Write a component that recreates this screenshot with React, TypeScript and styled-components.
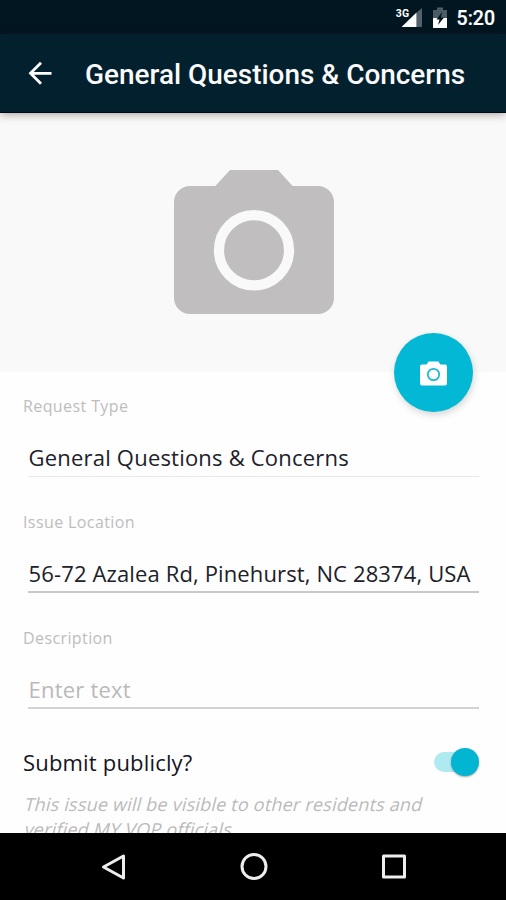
import React from "react";
import styled, { createGlobalStyle } from "styled-components";

const Global = createGlobalStyle`
  * { box-sizing: border-box; }
  html, body { margin: 0; padding: 0; background: #fff; }
  svg { display: block; flex: none; }
`;

const Screen = styled.div`
  width: 506px;
  height: 900px;
  display: flex;
  flex-direction: column;
  overflow: hidden;
  background: #fefefe;
  font-family: "Open Sans", sans-serif;
`;

const StatusBar = styled.div`
  height: 34px;
  flex: none;
  display: flex;
  justify-content: flex-end;
  padding: 0 11px 0 0;
  background: #011620;
  color: #fff;
`;

const Clock = styled.span`
  font: 500 19.5px/37px Roboto, sans-serif;
  white-space: nowrap;
  margin-left: 7px;
  -webkit-text-stroke: 0.2px #fff;
`;

const AppBar = styled.header`
  position: relative;
  z-index: 1;
  height: 79px;
  flex: none;
  display: flex;
  align-items: center;
  gap: 33px;
  padding: 0 0 0 28px;
  background: #02202e;
  border-bottom: 1px solid #010a10;
  box-shadow: 0 1px 9px rgba(40, 20, 20, 0.42);
`;

const Title = styled.h1`
  margin: 0;
  padding-top: 4px;
  font: 500 27.95px/32px Roboto, sans-serif;
  color: #fafafa;
  white-space: nowrap;
`;

const Photo = styled.section`
  position: relative;
  height: 259px;
  flex: none;
  display: flex;
  justify-content: center;
  padding: 41px 0 0 1px;
  background: #f9f9f9;
`;

const CameraButton = styled.button`
  position: absolute;
  right: 33px;
  bottom: -40px;
  width: 79px;
  height: 79px;
  display: flex;
  align-items: center;
  justify-content: center;
  padding: 2px 0 0;
  border: 0;
  border-radius: 50%;
  background: #02b8d4;
  box-shadow: 1px 3px 7px rgba(0, 0, 0, 0.16);
`;

const Form = styled.main`
  flex: 1;
  min-height: 0;
  overflow: hidden;
  padding: 20px 27px 0 23px;
`;

const Field = styled.div`
  height: 116px;
`;

const Label = styled.label`
  display: block;
  height: 28px;
  font-size: 16px;
  line-height: 28px;
  letter-spacing: 0.4px;
  color: #bdbdbd;
`;

const Value = styled.div<{ $line: string; $thick?: number; $muted?: boolean; $spacing?: number }>`
  height: 57px;
  margin-left: 5px;
  padding: 21px 0 0 0.6px;
  border-bottom: ${(p) => p.$thick ?? 1}px solid ${(p) => p.$line};
  font-size: 22px;
  line-height: 32px;
  letter-spacing: ${(p) => p.$spacing ?? 0.2}px;
  color: ${(p) => (p.$muted ? "#b9b9b9" : "#202029")};
  white-space: nowrap;
`;

const SwitchRow = styled.div`
  display: flex;
  align-items: center;
  justify-content: space-between;
  height: 44px;
  font-size: 22px;
  letter-spacing: 0.18px;
  color: #15151f;
`;

const Track = styled.div`
  width: 45px;
  height: 20px;
  display: flex;
  align-items: center;
  justify-content: flex-end;
  border-radius: 10px;
  background: linear-gradient(90deg, #b0eaf1 0 36px, transparent 36px);
`;

const Thumb = styled.div`
  width: 28px;
  height: 28px;
  flex: none;
  border-radius: 50%;
  background: #02b5d0;
  box-shadow: 0 1px 2px rgba(0, 0, 0, 0.35);
`;

const Hint = styled.p`
  margin: 8px 0 0 1.5px;
  font-size: 18px;
  line-height: 25px;
  color: #bababa;
  white-space: nowrap;
`;

const HintLine = styled.span`
  display: block;
  width: max-content;
  letter-spacing: 0.2px;
  transform: skewX(-14deg);
`;

const NavBar = styled.nav`
  height: 67px;
  flex: none;
  display: flex;
  align-items: center;
  justify-content: center;
  gap: 112px;
  padding-left: 1px;
  background: #000;
`;

const StatusIcons = () => (
  <svg width="56" height="34" viewBox="394 0 56 34">
    <text x="395.7" y="16.5" fontFamily="Roboto, sans-serif" fontWeight="700" fontSize="10.5" fill="#fff" textLength="13.5">3G</text>
    <path d="M416.5 12.8 L422 8 V27 H416.5 Z" fill="#52616a" />
    <path d="M416.5 12.5 V27 H401.5 Z" fill="#fff" />
    <path d="M433 10 h4 v-2.5 h6 v2.5 h4 v8.5 h-14 Z" fill="#4d5c64" />
    <path d="M433 18 h14 v10 h-14 Z" fill="#fff" />
    <path d="M442 12 L436.5 19.5 H439.5 L438 25 L444 17.5 H441 Z" fill="#011620" />
  </svg>
);

const Camera = () => (
  <svg width="192" height="192" viewBox="0 0 24 24">
    <path
      d="M9 2 7.17 4H4c-1.1 0-2 .9-2 2v12c0 1.1.9 2 2 2h16c1.1 0 2-.9 2-2V6c0-1.1-.9-2-2-2h-3.17L15 2H9z"
      fill="#c0bebf"
    />
    <circle cx="12" cy="12.03" r="4.38" fill="none" stroke="#f9f9f9" strokeWidth="1.28" />
  </svg>
);

const SmallCamera = () => (
  <svg width="27" height="25" viewBox="0 0 27 25">
    <path d="M8.5 .5 h10 l1.8 3 H25 q2 0 2 2 V22.5 q0 2 -2 2 H2 q-2 0 -2 -2 V5.5 q0 -2 2 -2 H6.7 Z" fill="#fff" />
    <circle cx="13.5" cy="13.5" r="5.7" fill="none" stroke="#18b9d2" strokeWidth="1.7" />
  </svg>
);

export default function App() {
  return (
    <>
      <Global />
      <Screen>
        <StatusBar>
          <StatusIcons />
          <Clock>5:20</Clock>
        </StatusBar>
        <AppBar>
          <svg width="24" height="24" viewBox="0 0 24 24" fill="none" stroke="#fff" strokeWidth="2.8">
            <path d="M13 1.8 L2.5 12.3 L13 22.8 M2.5 12.3 H23.5" />
          </svg>
          <Title>General Questions &amp; Concerns</Title>
        </AppBar>
        <Photo>
          <Camera />
          <CameraButton aria-label="Take photo">
            <SmallCamera />
          </CameraButton>
        </Photo>
        <Form>
          <Field>
            <Label>Request Type</Label>
            <Value $line="#e9e9e9">General Questions &amp; Concerns</Value>
          </Field>
          <Field>
            <Label>Issue Location</Label>
            <Value $line="#c9c9c9" $thick={2} $spacing={0.13}>56-72 Azalea Rd, Pinehurst, NC 28374, USA</Value>
          </Field>
          <Field>
            <Label>Description</Label>
            <Value $line="#d3d3d3" $thick={2} $muted>Enter text</Value>
          </Field>
          <SwitchRow>
            <span>Submit publicly?</span>
            <Track role="switch" aria-checked="true">
              <Thumb />
            </Track>
          </SwitchRow>
          <Hint>
            <HintLine>This issue will be visible to other residents and</HintLine>
            <HintLine>verified MY VOP officials.</HintLine>
          </Hint>
        </Form>
        <NavBar>
          <svg width="28" height="28" viewBox="0 0 28 28" fill="none" stroke="#eee" strokeWidth="3" strokeLinejoin="round">
            <path d="M23.5 3 V25 L3.5 14 Z" />
          </svg>
          <svg width="28" height="28" viewBox="0 0 28 28" fill="none" stroke="#eee" strokeWidth="3">
            <circle cx="14" cy="13.5" r="12" />
          </svg>
          <svg width="28" height="28" viewBox="0 0 28 28" fill="none" stroke="#eee" strokeWidth="3" strokeLinejoin="round">
            <rect x="3.5" y="3" width="21" height="21" />
          </svg>
        </NavBar>
      </Screen>
    </>
  );
}
